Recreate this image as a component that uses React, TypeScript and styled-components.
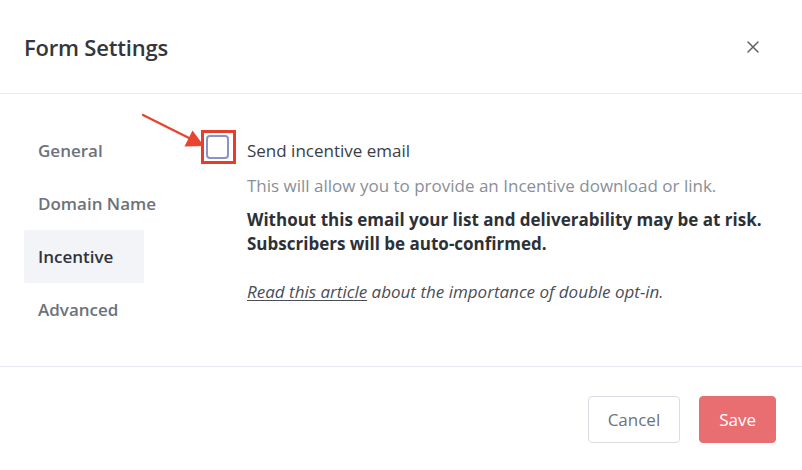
import styled, { createGlobalStyle } from 'styled-components';

const GlobalStyle = createGlobalStyle`
  html, body {
    margin: 0;
    padding: 0;
    background: #ffffff;
  }
  body {
    font-family: "Open Sans", "Liberation Sans", sans-serif;
    -webkit-font-smoothing: antialiased;
  }
  * {
    box-sizing: border-box;
  }
`;

const Modal = styled.div`
  width: 802px;
  height: 470px;
  display: flex;
  flex-direction: column;
  background: #ffffff;
`;

const Header = styled.header`
  height: 95px;
  padding: 0 36px 0 24px;
  display: flex;
  align-items: center;
  justify-content: space-between;
  border-bottom: 1px solid #e6e9ef;
`;

const Title = styled.h2`
  margin: 0;
  font-size: 22px;
  font-weight: 600;
  color: #33363c;
  letter-spacing: -0.2px;
`;

const CloseButton = styled.button`
  width: 26px;
  height: 26px;
  padding: 0;
  border: none;
  background: none;
  display: flex;
  align-items: center;
  justify-content: center;
  cursor: pointer;
`;

const Body = styled.div`
  flex: 1;
  display: flex;
  padding: 30px 24px 30px 24px;
  border-bottom: 1px solid #e6e9ef;
`;

const Nav = styled.nav`
  width: 120px;
  margin-right: 57px;
  display: flex;
  flex-direction: column;
`;

const NavItem = styled.div<{ $active?: boolean }>`
  height: 53px;
  padding: 0 14px;
  display: flex;
  align-items: center;
  font-size: 17px;
  font-weight: 600;
  white-space: nowrap;
  color: ${({ $active }) => ($active ? '#2f3238' : '#6d727a')};
  background: ${({ $active }) => ($active ? '#f3f4f8' : 'transparent')};
  cursor: pointer;
`;

const Content = styled.div`
  display: grid;
  grid-template-columns: 46px 1fr;
  align-content: start;
  padding-top: 6px;
`;

const Highlight = styled.div`
  position: relative;
  width: 35px;
  height: 34px;
  border: 3px solid #e53e2c;
  padding: 2px;
`;

const Checkbox = styled.div`
  width: 23px;
  height: 24px;
  border: 2px solid #8a93c6;
  border-radius: 4px;
  background: #ffffff;
`;

const Arrow = styled.svg`
  position: absolute;
  left: -63px;
  top: -21px;
  overflow: visible;
`;

const Text = styled.div`
  padding-top: 9px;
  font-size: 17px;
  line-height: 24px;
`;

const Label = styled.div`
  color: #3a3e45;
`;

const Hint = styled.p`
  margin: 11px 0 10px;
  color: #8a8f97;
`;

const Warning = styled.p`
  margin: 0 0 24px;
  font-weight: 700;
  color: #2d3137;
`;

const Note = styled.p`
  margin: 0;
  font-style: italic;
  color: #4a4e55;

  a {
    color: inherit;
    text-decoration: underline;
    text-underline-offset: 2px;
  }
`;

const Footer = styled.footer`
  height: 103px;
  padding: 29px 26px 0;
  display: flex;
  justify-content: flex-end;
  align-items: flex-start;
  gap: 19px;
`;

const Button = styled.button<{ $primary?: boolean }>`
  height: 47px;
  padding: 0 19px;
  border-radius: 4px;
  font-family: inherit;
  font-size: 17px;
  cursor: pointer;
  border: 1px solid ${({ $primary }) => ($primary ? '#e96e72' : '#d9dde2')};
  background: ${({ $primary }) => ($primary ? '#e96e72' : '#ffffff')};
  color: ${({ $primary }) => ($primary ? '#ffffff' : '#6d727a')};
`;

const navItems = ['General', 'Domain Name', 'Incentive', 'Advanced'];

export default function App() {
  return (
    <>
      <GlobalStyle />
      <Modal>
        <Header>
          <Title>Form Settings</Title>
          <CloseButton aria-label="Close">
            <svg width="12" height="12" viewBox="0 0 12 12">
              <path d="M1 1 L11 11 M11 1 L1 11" stroke="#5d6168" strokeWidth="1.5" strokeLinecap="round" />
            </svg>
          </CloseButton>
        </Header>
        <Body>
          <Nav>
            {navItems.map((item) => (
              <NavItem key={item} $active={item === 'Incentive'}>
                {item}
              </NavItem>
            ))}
          </Nav>
          <Content>
            <Highlight>
              <Checkbox />
              <Arrow width="64" height="36" viewBox="0 0 64 36">
                <line x1="2" y1="3" x2="50" y2="27" stroke="#e84430" strokeWidth="2.4" strokeLinecap="round" />
                <polygon points="63,34 43.5,34.5 51.5,18.5" fill="#e84430" />
              </Arrow>
            </Highlight>
            <Text>
              <Label>Send incentive email</Label>
              <Hint>This will allow you to provide an Incentive download or link.</Hint>
              <Warning>
                Without this email your list and deliverability may be at risk.
                <br />
                Subscribers will be auto-confirmed.
              </Warning>
              <Note>
                <a href="#">Read this article</a> about the importance of double opt-in.
              </Note>
            </Text>
          </Content>
        </Body>
        <Footer>
          <Button>Cancel</Button>
          <Button $primary>Save</Button>
        </Footer>
      </Modal>
    </>
  );
}
